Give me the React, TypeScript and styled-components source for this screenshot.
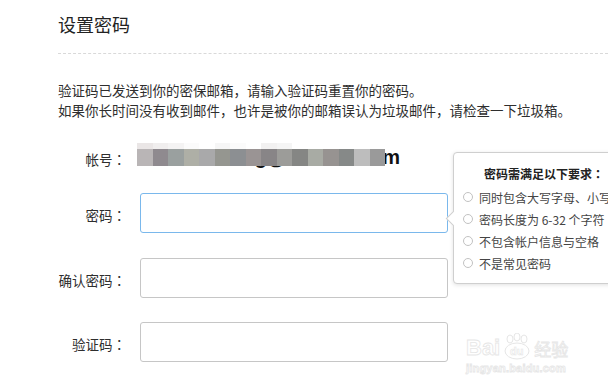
import React from 'react'
import styled, { createGlobalStyle } from 'styled-components'

const GlobalStyle = createGlobalStyle`
  html, body {
    margin: 0;
    padding: 0;
    background: #fff;
  }
  body {
    font-family: "Noto Sans CJK SC", "Noto Sans", sans-serif;
    color: #333;
    overflow: hidden;
  }
`

const Page = styled.div`
  position: relative;
  width: 608px;
  height: 381px;
  overflow: hidden;
  padding-left: 58px;
  box-sizing: border-box;
`

const Title = styled.h2`
  margin: 0;
  padding: 12px 0 17px;
  font-size: 18px;
  line-height: 24px;
  font-weight: normal;
  color: #222;
  border-bottom: 1px dashed #d9d9d9;
`

const Intro = styled.p`
  margin: 26px 0 0;
  font-size: 13.5px;
  line-height: 20px;
  color: #2e2e2e;
  white-space: nowrap;
`

const Form = styled.div`
  position: relative;
  display: flex;
  flex-direction: column;
`

const Row = styled.div<{ $top: number; $height?: number }>`
  display: grid;
  grid-template-columns: 68px 308px;
  column-gap: 14px;
  align-items: center;
  margin-top: ${({ $top }) => $top}px;
  height: ${({ $height }) => $height ?? 40}px;
`

const Label = styled.label`
  text-align: right;
  font-size: 13.5px;
  color: #2e2e2e;
  white-space: nowrap;
  padding-top: 3px;
`

// full-width colon centred in its cell, as in the original font
const Colon = styled.span`
  font-family: "Noto Sans CJK TC", sans-serif;
`

const Input = styled.input<{ $focus?: boolean }>`
  box-sizing: border-box;
  width: 100%;
  height: 40px;
  border: 1px solid ${({ $focus }) => ($focus ? '#7ab8ec' : '#c6c6c6')};
  border-radius: 3px;
  outline: none;
  padding: 0 10px;
  font-size: 14px;
  background: #fff;
`

const Account = styled.div`
  position: relative;
  height: 30px;
  display: flex;
  align-items: center;
`

const AccountText = styled.span`
  display: block;
  width: 260px;
  overflow: hidden;
  text-align: right;
  white-space: nowrap;
  font-family: "Liberation Sans", Arial, sans-serif;
  font-size: 20px;
  font-weight: bold;
  color: #111;
`

const Mosaic = styled.div`
  position: absolute;
  left: -3px;
  top: 1px;
  display: flex;
  flex-direction: column;
`

const MosaicRow = styled.div`
  display: flex;
`

const Tile = styled.span<{ $c: string; $h: number }>`
  display: block;
  width: 15.5px;
  height: ${({ $h }) => $h}px;
  background: ${({ $c }) => $c};
`

const Popup = styled.div`
  position: absolute;
  left: 395px;
  top: 32px;
  width: 190px;
  height: 132px;
  box-sizing: border-box;
  border: 1px solid #cfcfcf;
  border-radius: 4px;
  background: #fff;
  box-shadow: 0 1px 4px rgba(0, 0, 0, 0.12);
  padding: 11px 0 0 9px;
`

const Arrow = styled.span`
  position: absolute;
  left: -6px;
  top: 60px;
  width: 10px;
  height: 10px;
  background: #fff;
  border-left: 1px solid #cfcfcf;
  border-bottom: 1px solid #cfcfcf;
  transform: rotate(45deg);
`

const PopupTitle = styled.div`
  font-size: 12px;
  font-weight: bold;
  color: #222;
  line-height: 20px;
  padding-left: 21px;
  margin-bottom: 2px;
  white-space: nowrap;
`

const Rule = styled.div`
  display: flex;
  align-items: center;
  gap: 6px;
  height: 22px;
  font-size: 12px;
  color: #444;
  white-space: nowrap;
`

const Dot = styled.span`
  width: 8px;
  height: 8px;
  border: 1px solid #c2c2c2;
  border-radius: 50%;
  flex-shrink: 0;
`

const Watermark = styled.div`
  position: absolute;
  left: 466px;
  top: 333px;
  display: flex;
  flex-direction: column;
  color: #fff;
  -webkit-text-stroke: 0.8px #e6e6e6;
  font-family: "Liberation Sans", Arial, sans-serif;
  pointer-events: none;
`

const MarkTop = styled.div`
  display: flex;
  align-items: flex-end;
  gap: 2px;
  font-size: 22px;
  font-weight: bold;
  line-height: 26px;
`

const MarkCn = styled.span`
  font-family: "Noto Sans CJK SC", sans-serif;
  font-size: 17px;
  line-height: 24px;
  font-weight: normal;
`

const MarkUrl = styled.div`
  font-size: 11px;
  line-height: 14px;
  font-weight: bold;
  letter-spacing: 0.2px;
`

const top = ['#eae6e6', '#f0eeee', '#f4f3f3', '#fbfbfb', '#ffffff', '#f6f6f6', '#fbfbfb', '#ffffff', '#f2f1f1', '#f5f5f5', '#ffffff', '#ffffff', '#ffffff', '#ffffff', '#ffffff', '#ffffff']
const mid = ['#b9b5b6', '#8f8a8f', '#9aa09f', '#aeafa6', '#a9a9aa', '#959690', '#8c8f92', '#9a9494', '#888587', '#9c9c99', '#858684', '#a8aba4', '#979391', '#868988', '#bdbdbd', '#9a9a9a']

function PawIcon() {
  return (
    <svg width="30" height="28" viewBox="0 0 30 28" fill="#fff" stroke="#e6e6e6" strokeWidth="1">
      <ellipse cx="8" cy="6" rx="3" ry="4" />
      <ellipse cx="15" cy="4" rx="3" ry="4" />
      <ellipse cx="22" cy="6" rx="3" ry="4" />
      <ellipse cx="15" cy="18" rx="12" ry="8" />
      <text x="8" y="22" fontSize="11" fontWeight="bold" fontFamily="Liberation Sans, Arial, sans-serif" strokeWidth="0.6">
        du
      </text>
    </svg>
  )
}

export default function App() {
  return (
    <>
      <GlobalStyle />
      <Page>
        <Title>设置密码</Title>
        <Intro>
          验证码已发送到你的密保邮箱，请输入验证码重置你的密码。
          <br />
          如果你长时间没有收到邮件，也许是被你的邮箱误认为垃圾邮件，请检查一下垃圾箱。
        </Intro>

        <Form>
          <Row $top={22} $height={30}>
            <Label>
              帐号<Colon>：</Colon>
            </Label>
            <Account>
              <AccountText>xxxxxxg@xxxxxx.com</AccountText>
              <Mosaic>
                <MosaicRow>
                  {top.map((c, i) => (
                    <Tile key={i} $c={c} $h={6} />
                  ))}
                </MosaicRow>
                <MosaicRow>
                  {mid.map((c, i) => (
                    <Tile key={i} $c={c} $h={17} />
                  ))}
                </MosaicRow>
              </Mosaic>
            </Account>
          </Row>

          <Row $top={21}>
            <Label>
              密码<Colon>：</Colon>
            </Label>
            <Input type="password" $focus />
          </Row>
          <Row $top={25}>
            <Label>
              确认密码<Colon>：</Colon>
            </Label>
            <Input type="password" />
          </Row>
          <Row $top={24}>
            <Label>
              验证码<Colon>：</Colon>
            </Label>
            <Input type="text" />
          </Row>

          <Popup>
            <Arrow />
            <PopupTitle>
              密码需满足以下要求<Colon>：</Colon>
            </PopupTitle>
            <Rule>
              <Dot />
              同时包含大写字母、小写字母
            </Rule>
            <Rule>
              <Dot />
              密码长度为 6-32 个字符
            </Rule>
            <Rule>
              <Dot />
              不包含帐户信息与空格
            </Rule>
            <Rule>
              <Dot />
              不是常见密码
            </Rule>
          </Popup>
        </Form>

        <Watermark>
          <MarkTop>
            Bai
            <PawIcon />
            <MarkCn>经验</MarkCn>
          </MarkTop>
          <MarkUrl>jingyan.baidu.com</MarkUrl>
        </Watermark>
      </Page>
    </>
  )
}
